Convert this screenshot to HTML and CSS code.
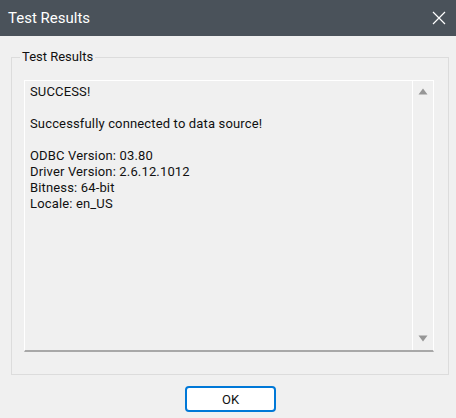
FILE: index.html
```html
<!DOCTYPE html>
<html>
<head>
<meta charset="utf-8">
<link rel="stylesheet" href="styles.css">
</head>
<body>
<div class="window">
  <div class="titlebar">
    <span class="title">Test Results</span>
    <svg class="close" width="14" height="14" viewBox="0 0 14 14"><path d="M1 1L13 13M13 1L1 13" stroke="#fff" stroke-width="1.2" fill="none"/></svg>
  </div>
  <div class="content">
    <fieldset class="group">
      <legend class="legend">Test Results</legend>
      <div class="textbox">
        <div class="text">SUCCESS!<br><br>Successfully connected to data source!<br><br>ODBC Version: 03.80<br>Driver Version: 2.6.12.1012<br>Bitness: 64-bit<br>Locale: en_US</div>
        <div class="scrollbar">
          <svg width="10" height="7" viewBox="0 0 10 7"><path d="M5 0.5L9.5 6.5H0.5Z" fill="#969696"/></svg>
          <svg width="10" height="7" viewBox="0 0 10 7"><path d="M0.5 0.5H9.5L5 6.5Z" fill="#969696"/></svg>
        </div>
      </div>
    </fieldset>
    <div class="buttons"><button class="ok">OK</button></div>
  </div>
</div>
</body>
</html>
```
FILE: styles.css
```css
html, body { margin: 0; padding: 0; }
body {
  background: #f0f0f0;
  font-family: Roboto, "Noto Sans", sans-serif;
  width: 456px;
  height: 418px;
  overflow: hidden;
}
.titlebar {
  height: 36px;
  background: #4a525a;
  display: flex;
  align-items: center;
  justify-content: space-between;
  padding: 0 10px 0 8px;
}
.title { color: #fff; font-size: 15px; font-family: Roboto, sans-serif; }
.content { padding: 12px 7px 0 11px; }
.group {
  margin: 0;
  border: 1px solid #dcdcdc;
  padding: 14px 14px 22px 12px;
}
.legend {
  font-size: 13px;
  line-height: 18px;
  color: #111;
  padding: 0 2px;
  margin-left: -4px;
}
.textbox {
  display: flex;
  height: 269px;
  border: 1px solid #fff;
  border-bottom: 2px solid #a8a8a8;
  background: #f0f0f0;
}
.text {
  flex: 1;
  font-size: 13px;
  line-height: 16px;
  letter-spacing: 0.15px;
  color: #111;
  padding: 3px 5px;
  white-space: nowrap;
}
.scrollbar {
  width: 20px;
  border-left: 1px solid #fff;
  display: flex;
  flex-direction: column;
  justify-content: space-between;
  align-items: center;
  padding: 7px 0 8px;
}
.buttons { display: flex; padding-top: 11px; padding-left: 174px; }
.ok {
  width: 91px;
  height: 26px;
  background: #fff;
  border: 2px solid #0078d7;
  border-radius: 4px;
  font-family: Roboto, sans-serif;
  font-size: 13px;
  color: #111;
  padding: 0;
}
```
